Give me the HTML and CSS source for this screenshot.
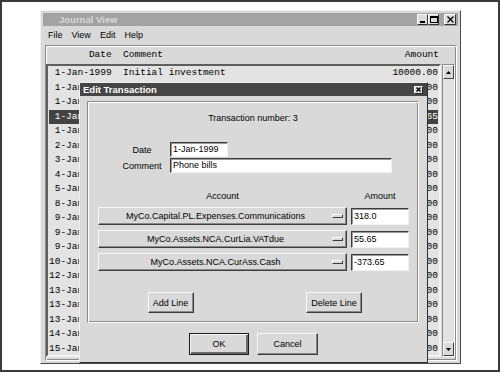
FILE: index.html
```html
<!DOCTYPE html>
<html>
<head>
<meta charset="utf-8">
<link rel="stylesheet" href="styles.css">
</head>
<body>
<div class="screen">
  <div class="win">
    <div class="titlebar">
      <span class="title">Journal View</span>
      <span class="tbb"><svg width="7" height="7" viewBox="0 0 7 7"><rect x="1" y="5" width="5" height="2" fill="#000"/></svg></span>
      <span class="tbb"><svg width="8" height="7" viewBox="0 0 8 7"><rect x="0.5" y="0.5" width="7" height="6" fill="none" stroke="#000"/><rect x="0" y="0" width="8" height="2" fill="#000"/></svg></span>
      <span class="tbb close"><svg width="7" height="7" viewBox="0 0 7 7"><path d="M0.5 0.5L6.5 6.5M6.5 0.5L0.5 6.5" stroke="#000" stroke-width="1.3"/></svg></span>
    </div>
    <div class="menubar"><span>File</span><span>View</span><span>Edit</span><span>Help</span></div>
    <div class="frame">
      <div class="hdr row mono"><span class="d">Date</span><span class="c">Comment</span><span class="a">Amount</span></div>
      <div class="listwrap">
        <div class="list mono">
          <div class="row"><span class="d">1-Jan-1999</span><span class="c">Initial investment</span><span class="a">10000.00</span></div>
          <div class="row"><span class="d">1-Jan-1999</span><span class="c">Office rent</span><span class="a">-500.00</span></div>
          <div class="row"><span class="d">1-Jan-1999</span><span class="c">Bank charges</span><span class="a">-12.00</span></div>
          <div class="row sel"><span class="d">1-Jan-1999</span><span class="c">Phone bills</span><span class="a">-373.65</span></div>
          <div class="row"><span class="d">1-Jan-1999</span><span class="c">Stationery</span><span class="a">-45.00</span></div>
          <div class="row"><span class="d">2-Jan-1999</span><span class="c">Consulting fees</span><span class="a">2500.00</span></div>
          <div class="row"><span class="d">3-Jan-1999</span><span class="c">Computer equipment</span><span class="a">-1800.00</span></div>
          <div class="row"><span class="d">4-Jan-1999</span><span class="c">Travel</span><span class="a">-120.00</span></div>
          <div class="row"><span class="d">5-Jan-1999</span><span class="c">Postage</span><span class="a">-20.00</span></div>
          <div class="row"><span class="d">8-Jan-1999</span><span class="c">Consulting fees</span><span class="a">1500.00</span></div>
          <div class="row"><span class="d">9-Jan-1999</span><span class="c">Electricity</span><span class="a">-90.00</span></div>
          <div class="row"><span class="d">9-Jan-1999</span><span class="c">Insurance</span><span class="a">-300.00</span></div>
          <div class="row"><span class="d">9-Jan-1999</span><span class="c">Software</span><span class="a">-250.00</span></div>
          <div class="row"><span class="d">10-Jan-1999</span><span class="c">Books</span><span class="a">-60.00</span></div>
          <div class="row"><span class="d">12-Jan-1999</span><span class="c">Consulting fees</span><span class="a">2000.00</span></div>
          <div class="row"><span class="d">13-Jan-1999</span><span class="c">Advertising</span><span class="a">-400.00</span></div>
          <div class="row"><span class="d">13-Jan-1999</span><span class="c">Printing</span><span class="a">-80.00</span></div>
          <div class="row"><span class="d">13-Jan-1999</span><span class="c">Courier</span><span class="a">-35.00</span></div>
          <div class="row"><span class="d">14-Jan-1999</span><span class="c">Subscriptions</span><span class="a">-150.00</span></div>
          <div class="row"><span class="d">15-Jan-1999</span><span class="c">Consulting fees</span><span class="a">1200.00</span></div>
        </div>
        <div class="sb">
          <span class="sbtn"><svg width="5" height="3" viewBox="0 0 5 3"><polygon points="0,3 2.5,0 5,3" fill="#000"/></svg></span>
          <span class="sbtn"><svg width="5" height="3" viewBox="0 0 5 3"><polygon points="0,0 2.5,3 5,0" fill="#000"/></svg></span>
        </div>
      </div>
    </div>
  </div>

  <div class="dlg">
    <div class="dtitle">
      <span class="dt">Edit Transaction</span>
      <span class="dclose"><svg width="5" height="5" viewBox="0 0 5 5"><path d="M0.5 0.5L4.5 4.5M4.5 0.5L0.5 4.5" stroke="#000" stroke-width="1.4"/></svg></span>
    </div>
    <div class="panel">
      <div class="tnum">Transaction number: 3</div>
      <div class="form">
        <span class="flabel">Date</span><span class="entry w-date">1-Jan-1999</span>
        <span class="flabel">Comment</span><span class="entry w-comment">Phone bills</span>
      </div>
      <div class="lines">
        <span class="colhead">Account</span><span class="colhead">Amount</span>
        <span class="optbtn"><span class="olbl">MyCo.Capital.PL.Expenses.Communications</span><span class="ind"></span></span><span class="entry amt">318.0</span>
        <span class="optbtn"><span class="olbl">MyCo.Assets.NCA.CurLia.VATdue</span><span class="ind"></span></span><span class="entry amt">55.65</span>
        <span class="optbtn"><span class="olbl">MyCo.Assets.NCA.CurAss.Cash</span><span class="ind"></span></span><span class="entry amt">-373.65</span>
      </div>
      <div class="linebtns">
        <span class="btn add">Add Line</span>
        <span class="btn del">Delete Line</span>
      </div>
    </div>
    <div class="dbtns">
      <span class="btn ok">OK</span>
      <span class="btn cancel">Cancel</span>
    </div>
  </div>
</div>
</body>
</html>
```

FILE: styles.css
```css
body {
  margin: 0;
  background: #fff;
  font-family: "Liberation Sans", Arial, sans-serif;
  font-size: 9px;
  color: #000;
}

.screen {
  position: relative;
  width: 500px;
  height: 372px;
  box-sizing: border-box;
  border: 2px solid #3a3a3a;
  padding: 8px 0 0 38px;
}

.win {
  width: 421px;
  height: 354px;
  box-sizing: border-box;
  border: 1px solid;
  border-color: #f2f2f2 #4a4a4a #4a4a4a #f2f2f2;
  padding: 2px;
  background: #d9d9d9;
  display: flex;
  flex-direction: column;
}

.titlebar {
  height: 13px;
  flex: none;
  background: #a3a3a3;
  display: flex;
  align-items: center;
  padding: 0 2px 0 16px;
}

.title {
  flex: 1;
  font-weight: bold;
  font-size: 9.5px;
  color: #d9d9d9;
}

.tbb {
  width: 11px;
  height: 11px;
  box-sizing: border-box;
  border: 1px solid;
  border-color: #fff #303030 #303030 #fff;
  background: #dcdcdc;
  display: flex;
  align-items: center;
  justify-content: center;
}

.tbb.close {
  margin-left: 5px;
  width: 12px;
}

.menubar {
  height: 17px;
  flex: none;
  display: flex;
  align-items: center;
  gap: 9px;
  padding-left: 5px;
}

.frame {
  flex: 1;
  min-height: 0;
  margin: 2px 1px 0 2px;
  border: 1px solid;
  border-color: #8a8a8a #fff #fff #8a8a8a;
  box-shadow: inset 1px 1px #fff, inset -1px -1px #8a8a8a;
  display: flex;
  flex-direction: column;
  padding-bottom: 3px;
}

.mono {
  font-family: "Liberation Mono", "Courier New", monospace;
  font-size: 9.5px;
}

.row {
  display: flex;
  white-space: pre;
  height: 14.5px;
  line-height: 14.5px;
}

.d { width: 11ch; text-align: right; flex: none; }
.c { margin-left: 2ch; }
.a { margin-left: auto; }

.hdr {
  height: 18px;
  line-height: 18px;
  flex: none;
  padding: 0 17px 0 3px;
}

.listwrap {
  flex: 1;
  min-height: 0;
  display: flex;
  gap: 1px;
  margin-right: 1px;
}

.list {
  flex: 1;
  border: 2px solid;
  border-color: #5e5e5e #f4f4f4 #f4f4f4 #5e5e5e;
  background: #e3e3e3;
  overflow: hidden;
  padding: 0 1px;
}

.sel {
  background: #434343;
  color: #fff;
}

.sb {
  width: 13px;
  box-sizing: border-box;
  border: 1px solid;
  border-color: #8a8a8a #fff #fff #8a8a8a;
  background: #e3e3e3;
  display: flex;
  flex-direction: column;
  justify-content: space-between;
}

.sbtn {
  height: 14px;
  box-sizing: border-box;
  border: 1px solid;
  border-color: #fff #404040 #404040 #fff;
  background: #d9d9d9;
  display: flex;
  align-items: center;
  justify-content: center;
}

/* dialog */
.dlg {
  position: absolute;
  left: 77px;
  top: 80px;
  width: 349px;
  height: 281px;
  box-sizing: border-box;
  border: 1px solid;
  border-color: #efefef #2e2e2e #2e2e2e #efefef;
  background: #d9d9d9;
  display: flex;
  flex-direction: column;
}

.dtitle {
  height: 13px;
  flex: none;
  background: #454545;
  color: #fff;
  font-weight: bold;
  font-size: 9.5px;
  display: flex;
  align-items: center;
  padding: 0 4px 0 3px;
}

.dt { flex: 1; }

.dclose {
  width: 9px;
  height: 8px;
  box-sizing: border-box;
  border: 1px solid;
  border-color: #fff #2a2a2a #2a2a2a #fff;
  background: #dcdcdc;
  display: flex;
  align-items: center;
  justify-content: center;
}

.panel {
  margin: 5px 8px 0 7px;
  height: 222px;
  box-sizing: border-box;
  border: 1px solid;
  border-color: #8a8a8a #fff #fff #8a8a8a;
  box-shadow: inset 1px 1px #fff, inset -1px -1px #8a8a8a;
  display: flex;
  flex-direction: column;
}

.tnum {
  text-align: center;
  line-height: 12px;
  margin-top: 10px;
}

.form {
  display: grid;
  grid-template-columns: 48px auto;
  grid-auto-rows: 15px;
  column-gap: 4px;
  row-gap: 1px;
  margin: 18px 0 0 30px;
  justify-content: start;
  align-items: center;
}

.flabel { text-align: center; }

.entry {
  display: block;
  box-sizing: border-box;
  height: 15px;
  line-height: 13px;
  padding-left: 2px;
  background: #fff;
  border: 1px solid;
  border-color: #3c3c3c #f2f2f2 #f2f2f2 #3c3c3c;
  box-shadow: inset 1px 1px #9a9a9a;
  white-space: nowrap;
}

.w-date { width: 58px; }
.w-comment { width: 222px; }

.lines {
  display: grid;
  grid-template-columns: 249px 58px;
  column-gap: 4px;
  grid-template-rows: 12px 18px 18px 18px;
  row-gap: 5px;
  margin: 17px 0 0 10px;
  align-items: center;
}

.colhead {
  text-align: center;
  line-height: 12px;
}

.optbtn {
  height: 18px;
  box-sizing: border-box;
  border: 1px solid;
  border-color: #f8f8f8 #3c3c3c #3c3c3c #f8f8f8;
  box-shadow: inset -1px -1px #8a8a8a;
  background: #d9d9d9;
  display: flex;
  align-items: center;
}

.olbl {
  flex: 1;
  text-align: center;
  white-space: nowrap;
}

.ind {
  width: 11px;
  height: 4px;
  box-sizing: border-box;
  border: 1px solid;
  border-color: #fff #3c3c3c #3c3c3c #fff;
  margin-right: 3px;
}

.amt {
  height: 17px;
  line-height: 15px;
}

.linebtns {
  display: grid;
  grid-template-columns: 1fr 1fr;
  justify-items: center;
  margin-top: 21px;
}

.btn {
  height: 21px;
  box-sizing: border-box;
  border: 1px solid;
  border-color: #f8f8f8 #3c3c3c #3c3c3c #f8f8f8;
  box-shadow: inset -1px -1px #8a8a8a;
  background: #d9d9d9;
  display: flex;
  align-items: center;
  justify-content: center;
}

.add { width: 46px; }
.del { width: 56px; margin-right: 3px; }

.dbtns {
  display: flex;
  justify-content: center;
  gap: 8px;
  margin-top: 10px;
}

.ok {
  width: 60px;
  height: 22px;
  border-color: #1a1a1a;
  box-shadow: inset 1px 1px #f8f8f8, inset -2px -2px #6a6a6a;
}

.cancel {
  width: 61px;
  height: 22px;
}
```
